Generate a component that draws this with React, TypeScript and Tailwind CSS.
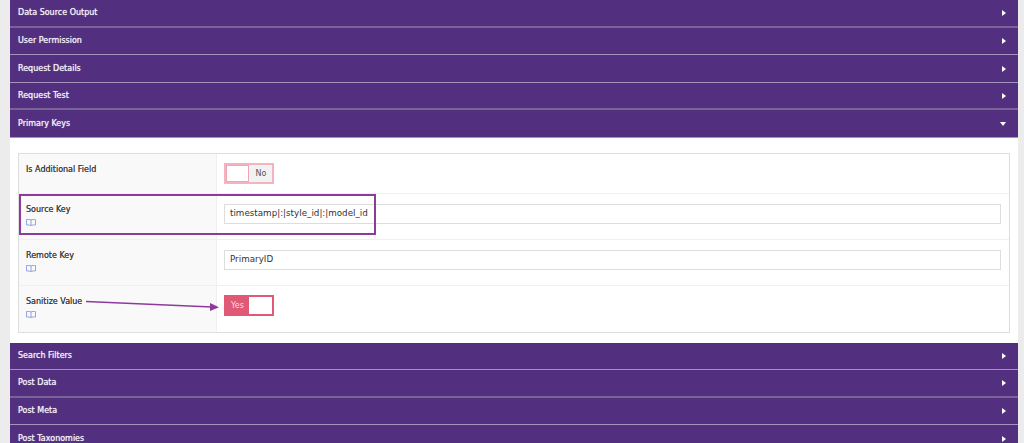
import React from "react";

const font = "font-['DejaVu_Sans',sans-serif]";

function Header({ title, open, shaded }: { title: string; open?: boolean; shaded?: boolean }) {
  return (
    <div className={`flex h-[27.5px] items-center justify-between border-b pt-px ${shaded ? "border-b-2 border-[#7a6497]" : "border-[#a493bd]"} bg-[#52307f] pl-2 pr-3 text-[8px] text-[#f1edf6] [text-shadow:0_0_0.7px_#f1edf6]`}>
      <span>{title}</span>
      {open ? (
        <svg width="6" height="4" viewBox="0 0 6 4"><path d="M0 0h6L3 4z" fill="#fff" /></svg>
      ) : (
        <svg width="4" height="6" viewBox="0 0 4 6"><path d="M0 0l4 3L0 6z" fill="#fff" /></svg>
      )}
    </div>
  );
}

function Book() {
  return (
    <svg width="10" height="7" viewBox="0 0 10 7" fill="none" stroke="#7f8fd6" strokeWidth="0.8" className="mt-[4px]">
      <path d="M5 .9C4 .4 2 .3.5.5v5.500C2 5.800 4 6 5 6.500c1-.5 3-.7 4.500-.5V.5C8 .3 6 .4 5 .9zM5 .9v5.600" />
    </svg>
  );
}

function Row({ label, book, height, last, children }: { label: string; book?: boolean; height: string; last?: boolean; children: React.ReactNode }) {
  return (
    <div className={`flex ${height} ${last ? "" : "border-b border-[#f0f0f0]"}`}>
      <div className="w-[198px] shrink-0 border-r border-[#f0f0f0] bg-[#f9f9f9] pl-[7px] pt-[11px] text-[8px] leading-[10px] text-[#444] [text-shadow:0_0_0.5px_#444]">
        <div>{label}</div>
        {book && <Book />}
      </div>
      <div className="min-w-0 flex-1 pl-[7px] pr-2 pt-[10px]">{children}</div>
    </div>
  );
}

function TextBox({ value }: { value: string }) {
  return (
    <div className="flex h-[20px] items-center border border-[#dddddd] bg-white pl-[5px] text-[8.75px] text-[#333]">
      {value}
    </div>
  );
}

export default function App() {
  return (
    <div className={`relative h-[443px] w-[1024px] overflow-hidden bg-[#ececec] ${font}`}>
      <div className="ml-[10px] w-[1008px]">
        <Header title="Data Source Output" shaded />
        <Header title="User Permission" />
        <Header title="Request Details" />
        <Header title="Request Test" shaded />
        <Header title="Primary Keys" open />
        <div className="bg-white px-2 pb-[10px] pt-[15px]">
          <div className="border border-[#dddddd]">
            <Row label="Is Additional Field" height="h-[40px]">
              <div className="-mt-px flex h-[21px] w-[50px] border-2 border-[#f4b3c0] bg-[#f2f2f2]">
                <div className="h-full w-[23px] border border-[#f0a5b4] bg-white" />
                <div className="flex flex-1 items-center justify-center pl-px pt-px text-[8px] text-[#555]">No</div>
              </div>
            </Row>
            <Row label="Source Key" book height="h-[46px]">
              <TextBox value="timestamp|:|style_id|:|model_id" />
            </Row>
            <Row label="Remote Key" book height="h-[46px]">
              <TextBox value="PrimaryID" />
            </Row>
            <Row label="Sanitize Value" book height="h-[46px]" last>
              <div className="-mt-px flex h-[21px] w-[50px] border-2 border-[#e05a75] bg-[#e05a75]">
                <div className="flex w-[23px] items-center justify-center pt-px text-[8px] text-[#fbdde3]">Yes</div>
                <div className="h-full flex-1 bg-white" />
              </div>
            </Row>
          </div>
        </div>
        <Header title="Search Filters" />
        <Header title="Post Data" shaded />
        <Header title="Post Meta" />
        <Header title="Post Taxonomies" />
      </div>
      <div className="absolute left-[19px] top-[194px] h-[41px] w-[357px] border-2 border-[#8e3a9c]" />
      <svg className="absolute left-[86px] top-[300px]" width="134" height="12" viewBox="0 0 134 12">
        <path d="M0 1.500L126 7" stroke="#8e3a9c" strokeWidth="1.500" fill="none" />
        <path d="M124 3L133 7.300L124 11z" fill="#8e3a9c" />
      </svg>
    </div>
  );
}
